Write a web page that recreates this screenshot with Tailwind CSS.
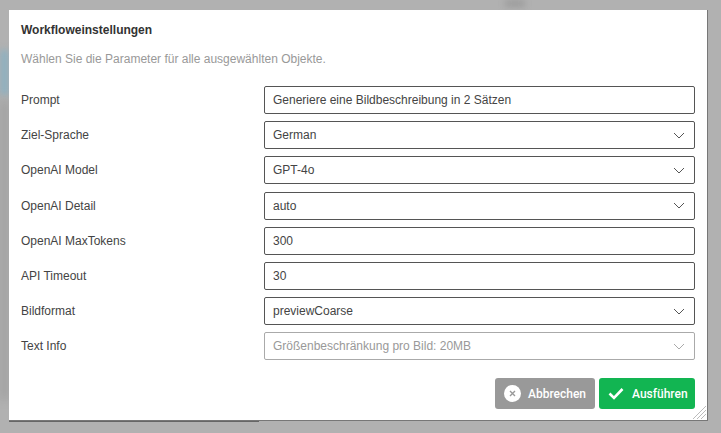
<!DOCTYPE html>
<html lang="de">

<head>
    <meta charset="UTF-8">
    <meta name="viewport" content="width=device-width, initial-scale=1.0">
    <title>Workfloweinstellungen</title>
    <script src="https://cdn.jsdelivr.net/npm/@tailwindcss/browser@4"></script>
</head>

<body class="bg-[#b1b1b1] overflow-hidden font-['Liberation_Sans',sans-serif]">
    <div class="relative w-[721px] h-[433px] overflow-hidden">
        <!-- Blurred page behind the dialog -->
        <div class="absolute left-0 top-[50px] w-[9px] h-[45px] bg-[#8fb0bf] blur-[3px]"></div>
        <div class="absolute left-0 top-[100px] w-[9px] h-[300px] bg-[#a2a2a2] blur-[4px]"></div>
        <div class="absolute left-[505px] top-0 w-[20px] h-[7px] bg-[#9c9c9c] blur-[3px]"></div>
        <div class="absolute left-[9px] top-[421px] w-[250px] h-[1px] bg-[#666] blur-[0.5px]"></div>

        <!-- Dialog -->
        <div class="absolute left-[9px] top-[10px] w-[699px] h-[411px] bg-white border-r border-b border-[#777] px-3 pt-[13px]">
            <h2 class="text-[12px] leading-[15px] font-bold text-[#333]">Workfloweinstellungen</h2>
            <p class="mt-[14px] text-[12px] leading-[15px] text-[#999]">Wählen Sie die Parameter für alle ausgewählten Objekte.</p>

            <div class="mt-[19px] flex flex-col gap-[7.2px] text-[12px] text-[#444]">
                <!-- Prompt -->
                <div class="flex items-center h-[28px]">
                    <label class="w-[243px]">Prompt</label>
                    <div class="w-[431px] h-[28px] border border-[#555] rounded-[2px] px-2 flex items-center">Generiere eine Bildbeschreibung in 2 Sätzen</div>
                </div>
                <!-- Ziel-Sprache -->
                <div class="flex items-center h-[28px]">
                    <label class="w-[243px]">Ziel-Sprache</label>
                    <div class="w-[431px] h-[28px] border border-[#555] rounded-[2px] px-2 flex items-center justify-between">
                        <span>German</span>
                        <svg class="w-[12px] h-[7px] mr-[1px]" viewBox="0 0 12 7" fill="none" stroke="#555" stroke-width="1"><path d="M1 1l5 5 5-5" /></svg>
                    </div>
                </div>
                <!-- OpenAI Model -->
                <div class="flex items-center h-[28px]">
                    <label class="w-[243px]">OpenAI Model</label>
                    <div class="w-[431px] h-[28px] border border-[#555] rounded-[2px] px-2 flex items-center justify-between">
                        <span>GPT-4o</span>
                        <svg class="w-[12px] h-[7px] mr-[1px]" viewBox="0 0 12 7" fill="none" stroke="#555" stroke-width="1"><path d="M1 1l5 5 5-5" /></svg>
                    </div>
                </div>
                <!-- OpenAI Detail -->
                <div class="flex items-center h-[28px]">
                    <label class="w-[243px]">OpenAI Detail</label>
                    <div class="w-[431px] h-[28px] border border-[#555] rounded-[2px] px-2 flex items-center justify-between">
                        <span>auto</span>
                        <svg class="w-[12px] h-[7px] mr-[1px]" viewBox="0 0 12 7" fill="none" stroke="#555" stroke-width="1"><path d="M1 1l5 5 5-5" /></svg>
                    </div>
                </div>
                <!-- OpenAI MaxTokens -->
                <div class="flex items-center h-[28px]">
                    <label class="w-[243px]">OpenAI MaxTokens</label>
                    <div class="w-[431px] h-[28px] border border-[#555] rounded-[2px] px-2 flex items-center">300</div>
                </div>
                <!-- API Timeout -->
                <div class="flex items-center h-[28px]">
                    <label class="w-[243px]">API Timeout</label>
                    <div class="w-[431px] h-[28px] border border-[#555] rounded-[2px] px-2 flex items-center">30</div>
                </div>
                <!-- Bildformat -->
                <div class="flex items-center h-[28px]">
                    <label class="w-[243px]">Bildformat</label>
                    <div class="w-[431px] h-[28px] border border-[#555] rounded-[2px] px-2 flex items-center justify-between">
                        <span>previewCoarse</span>
                        <svg class="w-[12px] h-[7px] mr-[1px]" viewBox="0 0 12 7" fill="none" stroke="#555" stroke-width="1"><path d="M1 1l5 5 5-5" /></svg>
                    </div>
                </div>
                <!-- Text Info -->
                <div class="flex items-center h-[28px]">
                    <label class="w-[243px]">Text Info</label>
                    <div class="w-[431px] h-[28px] border border-[#aaa] rounded-[2px] px-2 flex items-center justify-between text-[#999]">
                        <span>Größenbeschränkung pro Bild: 20MB</span>
                        <svg class="w-[12px] h-[7px] mr-[1px]" viewBox="0 0 12 7" fill="none" stroke="#aaa" stroke-width="1"><path d="M1 1l5 5 5-5" /></svg>
                    </div>
                </div>
            </div>

            <!-- Buttons -->
            <div class="mt-[18px] flex justify-end gap-[4px] font-['Roboto',sans-serif] text-[12px] font-medium text-white">
                <button class="w-[100px] h-[31px] bg-[#999] rounded-[3px] flex items-center pl-[9px] gap-[7px]">
                    <span class="w-[17px] h-[17px] rounded-full bg-white flex items-center justify-center">
                        <svg class="w-[7px] h-[7px]" viewBox="0 0 7 7" fill="none" stroke="#999" stroke-width="1.4"><path d="M1 1l5 5M6 1L1 6" /></svg>
                    </span>
                    Abbrechen
                </button>
                <button class="w-[96px] h-[31px] bg-[#12b552] rounded-[3px] flex items-center pl-[9px] gap-[8px]">
                    <svg class="w-[16px] h-[13px]" viewBox="0 0 16 13" fill="none" stroke="#fff" stroke-width="2.6"><path d="M1.5 6.5l4.5 4.5 8.5-9" /></svg>
                    Ausführen
                </button>
            </div>

            <!-- Resize handle -->
            <svg class="absolute right-[1px] bottom-[1px] w-[14px] h-[14px]" viewBox="0 0 14 14" stroke="#bbb" stroke-width="1"><path d="M1 14L14 1M5 14l9-9M9 14l5-5" /></svg>
        </div>
    </div>
</body>

</html>
